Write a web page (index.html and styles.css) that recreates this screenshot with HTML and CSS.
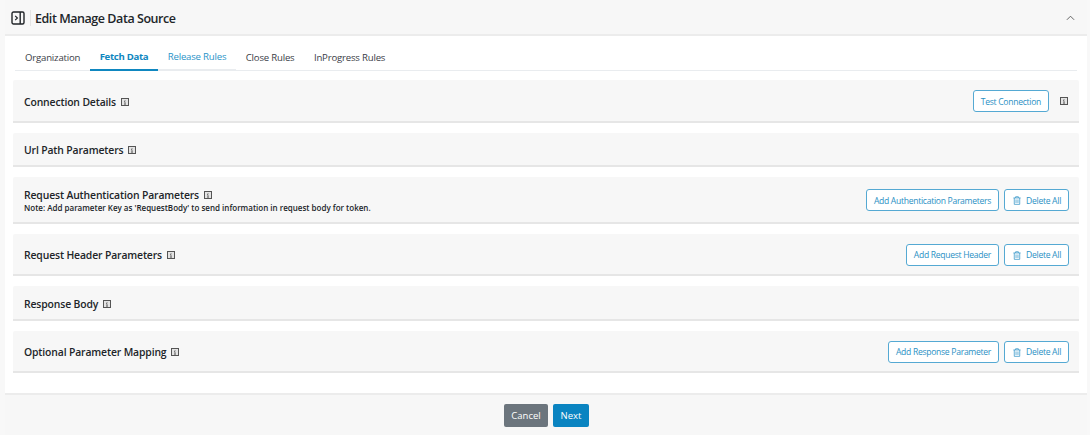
FILE: index.html
```html
<!DOCTYPE html>
<html lang="en">
<head>
<meta charset="utf-8">
<title>Edit Manage Data Source</title>
<link rel="stylesheet" href="styles.css">
</head>
<body>
<svg class="defs" width="0" height="0" aria-hidden="true">
  <symbol id="info" viewBox="0 0 8 8">
    <rect x="0.5" y="0.5" width="7" height="7" fill="#e4e4e4" stroke="currentColor"/>
    <path d="M4 2v.8M4 3.6V6M3 3.6h1M3 6.2h2" fill="none" stroke="currentColor" stroke-width=".8"/>
  </symbol>
  <symbol id="trash" viewBox="0 0 10 11">
    <path d="M.5 2.3h9M3.3 2.3V.8h3.4v1.5M1.6 2.3v8h6.8v-8M3.8 4.2v4.4M6.2 4.2v4.4" fill="none" stroke="currentColor" stroke-width=".9"/>
  </symbol>
</svg>
<main class="card">
  <header class="card-head">
    <svg class="panel-icon" viewBox="0 0 14 14" aria-hidden="true">
      <rect x="1" y="1" width="12" height="12" rx="1.5" fill="none" stroke="#212529" stroke-width="1.4"/>
      <path d="M9.2 1v12" stroke="#212529" stroke-width="1.4"/>
      <path d="M4.2 4.8 6.4 7 4.2 9.2" fill="none" stroke="#212529" stroke-width="1.2"/>
    </svg>
    <span class="head-sep"></span>
    <h1 class="card-title">Edit Manage Data Source</h1>
    <svg class="chevron" viewBox="0 0 10 6" aria-hidden="true"><path d="M1 5l4-4 4 4" fill="none" stroke="#555" stroke-width="1"/></svg>
  </header>
  <div class="card-body">
    <nav class="tabs">
      <a class="tab">Organization</a>
      <a class="tab tab-active">Fetch Data</a>
      <a class="tab tab-hover">Release Rules</a>
      <a class="tab">Close Rules</a>
      <a class="tab">InProgress Rules</a>
    </nav>
    <section class="panel panel-first">
      <div class="panel-text"><h2 class="panel-title">Connection Details <svg class="info"><use href="#info"/></svg></h2></div>
      <div class="panel-actions">
        <button class="btn">Test Connection</button>
        <svg class="info info-end"><use href="#info"/></svg>
      </div>
    </section>
    <section class="panel panel-slim">
      <div class="panel-text"><h2 class="panel-title">Url Path Parameters <svg class="info"><use href="#info"/></svg></h2></div>
    </section>
    <section class="panel panel-note-row">
      <div class="panel-text">
        <h2 class="panel-title">Request Authentication Parameters <svg class="info"><use href="#info"/></svg></h2>
        <p class="panel-note">Note: Add parameter Key as 'RequestBody' to send information in request body for token.</p>
      </div>
      <div class="panel-actions">
        <button class="btn">Add Authentication Parameters</button>
        <button class="btn"><svg class="trash"><use href="#trash"/></svg>Delete All</button>
      </div>
    </section>
    <section class="panel panel-action">
      <div class="panel-text"><h2 class="panel-title">Request Header Parameters <svg class="info"><use href="#info"/></svg></h2></div>
      <div class="panel-actions">
        <button class="btn">Add Request Header</button>
        <button class="btn"><svg class="trash"><use href="#trash"/></svg>Delete All</button>
      </div>
    </section>
    <section class="panel panel-body">
      <div class="panel-text"><h2 class="panel-title">Response Body <svg class="info"><use href="#info"/></svg></h2></div>
    </section>
    <section class="panel panel-action">
      <div class="panel-text"><h2 class="panel-title">Optional Parameter Mapping <svg class="info"><use href="#info"/></svg></h2></div>
      <div class="panel-actions">
        <button class="btn">Add Response Parameter</button>
        <button class="btn"><svg class="trash"><use href="#trash"/></svg>Delete All</button>
      </div>
    </section>
  </div>
  <footer class="card-foot">
    <button class="foot-btn foot-cancel">Cancel</button>
    <button class="foot-btn foot-next">Next</button>
  </footer>
</main>
</body>
</html>
```
FILE: styles.css
```css
* { box-sizing: border-box; }
html, body { height: 100%; }
body {
  margin: 0;
  background: #f8f8f8;
  font-family: "Open Sans", "Liberation Sans", sans-serif;
  color: #212529;
  overflow: hidden;
}
.defs { position: absolute; }
.card {
  margin-left: 5px;
  width: 1082px;
  height: 435px;
  background: #fff;
  display: flex;
  flex-direction: column;
}
.card-head {
  height: 36px;
  background: #f7f7f7;
  border-bottom: 2px solid #ececec;
  display: flex;
  align-items: center;
  padding: 2px 13px 0 6px;
  flex: none;
}
.panel-icon { width: 14px; height: 14px; flex: none; }
.head-sep { width: 1px; height: 16px; background: #e4e4e4; margin: 0 4px 0 5px; }
.card-title {
  margin: 0;
  font-size: 12.5px;
  font-weight: 600;
  letter-spacing: -0.45px;
  flex: 1;
}
.chevron { width: 9px; height: 6px; margin-right: -1px; }
.card-body { flex: 1; padding: 0 8px; }
.tabs {
  display: flex;
  height: 35px;
  margin: 0 2px 9px;
  border-bottom: 1px solid #e9ecef;
}
.tab {
  display: flex;
  align-items: center;
  padding: 11px 9.7px 4px;
  font-size: 9.6px;
  letter-spacing: -0.19px;
  height: 35px;
  color: #3a4047;
}
.tab:first-child { padding-left: 10px; }
.tab-active {
  color: #0f87c0;
  font-weight: 700;
  letter-spacing: -0.3px;
  border-bottom: 2px solid #0f87c0;
}
.tab-hover {
  color: #2a94c8;
  border-bottom: 2px solid #e9ecef;
}
.panel {
  background: #f7f7f7;
  border-bottom: 2px solid #e6e6e6;
  border-radius: 2px 2px 0 0;
  display: flex;
  align-items: center;
  justify-content: space-between;
  padding: 2px 10px 0 11px;
  margin-bottom: 10px;
  width: 1066px;
}
.panel-first { height: 43px; }
.panel-slim { height: 34px; }
.panel-note-row { height: 47px; }
.panel-action { height: 42px; }
.panel-body { height: 35px; }
.panel-title {
  margin: 0;
  font-size: 10.4px;
  font-weight: 600;
  letter-spacing: -0.14px;
  display: flex;
  align-items: center;
  line-height: 14px;
  white-space: pre;
}
.panel-note {
  margin: 0;
  font-size: 8px;
  font-weight: 600;
  line-height: 11px;
}
.info { width: 8px; height: 8px; color: #555; margin-left: 2px; flex: none; }
.info-end { margin-left: 6px; margin-right: 1px; }
.panel-actions { display: flex; align-items: center; gap: 5px; margin-top: -1px; }
.btn {
  height: 22px;
  padding: 1px 7px 0;
  background: #fff;
  border: 1px solid #55a9d3;
  border-radius: 3px;
  color: #2a90c4;
  font-family: inherit;
  font-size: 8.6px;
  letter-spacing: -0.3px;
  display: inline-flex;
  align-items: center;
}
.trash { width: 8px; height: 9px; margin: 0 5px 0 1px; }
.card-foot {
  flex: none;
  height: 42px;
  background: #f7f7f7;
  border-top: 2px solid #ececec;
  display: flex;
  justify-content: center;
  align-items: center;
  gap: 5px;
  padding-left: 1px;
}
.foot-btn {
  height: 23px;
  border: none;
  border-radius: 2px;
  color: #fff;
  font-family: inherit;
  font-size: 9.5px;
  padding: 0;
}
.foot-cancel { background: #6c757d; width: 44px; }
.foot-next { background: #0a84c1; width: 36px; }
```
